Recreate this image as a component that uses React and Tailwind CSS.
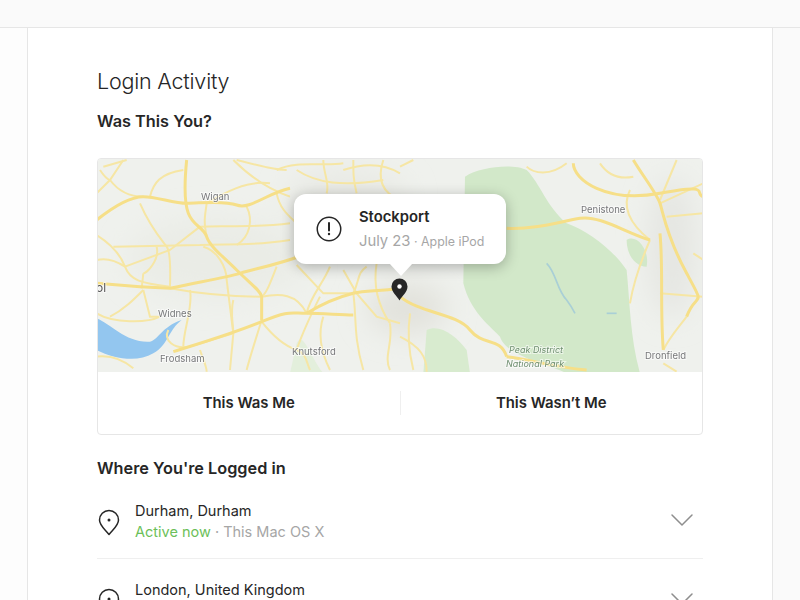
import { ChevronDown } from 'lucide-react';

const FONT = { fontFamily: 'Inter, "Noto Sans", sans-serif' };

function PinOutline() {
    return (
        <svg width="22" height="27" viewBox="0 0 22 27" fill="none" stroke="#262626" strokeWidth="1.5">
            <path d="M11 25.5C7 20.5 1.5 16.5 1.5 11a9.5 9.5 0 0 1 19 0c0 5.500-5.500 9.500-9.500 14.500z" strokeLinejoin="round" />
            <circle cx="11" cy="11" r="1.500" fill="#262626" stroke="none" />
        </svg>
    );
}

function MapBackground() {
    const thick = [
        'M20 210C70 170 120 140 160 140S250 160 290 160 400 150 440 165 530 130 600 115',
        'M290 30C285 80 280 150 295 190S340 230 350 260 400 320 440 360 510 420 515 440L515 510',
        'M20 400L150 410 240 415C300 400 400 385 450 370S560 345 640 315',
        'M250 605C330 580 430 550 515 515S600 490 650 490 750 495 790 495',
        'M790 430C830 420 860 425 930 415',
        'M650 490C700 460 750 440 790 430',
    ];
    const thin = [
        'M20 255C60 280 90 310 105 350S150 400 240 410',
        'M240 415C320 430 420 440 515 440',
        'M515 515C550 560 590 590 620 600S650 640 660 660',
        'M430 550L420 660',
        'M60 90C90 130 130 140 160 140',
        'M40 50L110 30M30 60C50 90 60 90 60 90',
        'M430 30C480 80 540 120 600 140',
        'M560 60C620 30 700 50 760 40',
        'M70 290L330 285C400 280 480 290 600 270',
        'M330 230C400 225 500 235 600 220',
        'M150 160C180 230 215 270 230 290S240 390 240 410',
        'M235 540C220 570 250 600 300 590L430 550',
        'M410 390L430 550',
        'M160 370L155 415',
        'M130 655C100 630 60 615 20 620',
        'M20 490C70 520 170 520 210 500',
        'M790 430C810 390 800 370 830 350',
        'M760 360L800 430 860 500 930 520',
        'M690 440C670 480 640 540 620 600',
        'M880 30C860 90 880 130 930 150',
        'M350 160C345 200 340 210 350 260',
        'M105 350L240 300 330 230',
        'M650 490C660 440 700 400 720 350',
        'M790 430C800 500 790 560 820 660',
        'M860 340C850 400 860 460 900 520',
        'M700 500C680 560 700 620 720 660',
        'M900 520C910 580 880 620 900 660',
        'M620 345L700 430 790 430',
        'M560 350C540 400 530 430 515 440',
        'M515 510C500 560 480 620 470 660',
        'M620 60C680 100 760 110 880 90',
        'M700 30C700 70 720 100 710 130',
        'M790 30C790 70 790 90 800 130',
        'M760 60C820 40 880 40 930 70',
        'M440 30C520 50 560 60 590 60',
        'M100 30L60 90 20 130',
        'M180 140C190 100 210 70 280 60',
        'M350 160C400 130 470 90 540 100',
        'M470 170C490 210 480 260 440 285',
        'M200 290C210 330 170 370 160 370',
        'M340 290C380 300 410 350 410 390',
        'M20 330C60 320 90 340 105 350',
        'M60 500C100 480 130 450 160 420',
        'M300 420C310 470 280 540 280 590',
        'M430 450C420 490 430 520 430 550',
        'M330 600C340 630 350 650 350 665',
        'M515 440C570 430 620 430 650 490',
        'M160 420L180 500 210 500',
        'M560 130C570 180 600 200 620 220',
    ];
    const rightThick = [
        'M320 235C400 240 480 215 540 205S680 250 750 270',
        'M700 30C730 80 770 130 780 160S800 260 860 370 890 420 860 500',
        'M520 40C520 90 620 160 780 130S880 130 910 140',
        'M780 250C790 350 780 480 790 600',
        'M0 440C60 490 170 490 210 540S300 560 320 620',
        'M320 620C400 630 450 650 560 660',
    ];
    const rightThin = [
        'M780 160L910 100',
        'M830 30L780 150',
        'M800 200L910 190',
        'M780 430L910 440',
        'M30 490C20 560 30 620 40 660',
        'M790 640L830 665',
        'M0 50L40 30',
        'M860 500C830 540 810 560 790 600',
        'M500 40C450 80 400 70 380 50',
        'M690 120C660 180 700 230 750 270',
        'M750 270C720 340 700 400 690 460',
        'M880 310L910 330',
        'M600 40C620 70 650 90 700 80',
        'M0 560C60 590 80 620 80 665',
    ];

    return (
        <svg className="block blur-[0.5px]" width="606" height="214" viewBox="0 0 606 214">
            <defs>
                <filter id="soft" x="-50%" y="-50%" width="200%" height="200%">
                    <feGaussianBlur stdDeviation="14" />
                </filter>
            </defs>
            <rect width="606" height="214" fill="#eff1ed" />
            <g filter="url(#soft)">
                <ellipse cx="310" cy="150" rx="40" ry="26" fill="#e2e2dc" />
                <ellipse cx="250" cy="40" rx="60" ry="28" fill="#e8e9e4" />
                <ellipse cx="575" cy="90" rx="24" ry="70" fill="#e5e6e2" />
                <ellipse cx="120" cy="100" rx="90" ry="40" fill="#eaece6" />
            </g>

            <g transform="translate(-7 -8) scale(0.3333)">
                <path d="M20 505C60 520 110 580 180 575 205 570 215 530 275 510 235 540 235 585 190 610 140 640 70 625 20 600Z" fill="#93c6ef" />
                <path d="M620 580C640 540 660 620 700 670L600 670Z" fill="#e3efdc" />
                {thin.map((d) => (
                    <path key={d} d={d} fill="none" stroke="#f6e6a4" strokeWidth="6" />
                ))}
                {thick.map((d) => (
                    <path key={d} d={d} fill="none" stroke="#f6df88" strokeWidth="9" />
                ))}
            </g>

            <g transform="translate(303 -8) scale(0.3333)">
                <path d="M195 80C240 50 340 40 380 60 420 100 440 170 500 220 560 240 640 300 680 360 690 460 690 560 720 670L500 670C440 640 320 620 300 560 260 520 210 480 190 400Z" fill="#d2e8c9" />
                <path d="M80 540C120 520 170 560 200 600L210 670 70 670Z" fill="#d8ebcf" />
                <path d="M680 270C710 250 750 300 740 350 710 350 680 320 680 270Z" fill="#d2e8c9" />
                <path d="M440 340C470 370 470 420 500 450 515 470 520 480 525 490" fill="none" stroke="#a9cfd6" strokeWidth="5" />
                <path d="M620 490L650 490" stroke="#a9cfd6" strokeWidth="5" />
                {rightThin.map((d) => (
                    <path key={d} d={d} fill="none" stroke="#f6e6a4" strokeWidth="6" />
                ))}
                {rightThick.map((d) => (
                    <path key={d} d={d} fill="none" stroke="#f6df88" strokeWidth="9" />
                ))}
            </g>

            <g fontSize="9.5" fill="#77787a" stroke="#ffffff" strokeWidth="2" strokeOpacity="0.6" paintOrder="stroke" style={FONT}>
                <text x="104" y="42">Wigan</text>
                <text x="61" y="159">Widnes</text>
                <text x="63" y="204">Frodsham</text>
                <text x="195" y="197">Knutsford</text>
                <text x="484" y="55">Penistone</text>
                <text x="548" y="201">Dronfield</text>
                <text x="-1" y="134" fontSize="12" fill="#555">ol</text>
                <g fontStyle="italic" fill="#6f8f70" fontSize="9">
                    <text x="412" y="195">Peak District</text>
                    <text x="409" y="209">National Park</text>
                </g>
            </g>
        </svg>
    );
}

function SessionRow({ city, children }) {
    return (
        <div className="flex items-start h-[79px] pt-[21px] border-b border-[#efefef]">
            <div className="w-[38px] pt-[8px] pl-[1px] shrink-0">
                <PinOutline />
            </div>
            <div className="flex-1 text-[14.500px] leading-[20px]">
                <div className="text-[#262626]">{city}</div>
                <div className="mt-px text-[#a6a6a6]">{children}</div>
            </div>
            <ChevronDown className="-mt-px mr-px" size={40} strokeWidth={0.9} color="#8e8e8e" />
        </div>
    );
}

export default function App() {
    return (
        <div className="h-[600px] overflow-hidden bg-[#fafafa]" style={FONT}>
            <div className="h-[28px] border-b border-[#e6e6e6]" />
            <div className="flex h-[572px]">
                <div className="w-[27px] bg-[#fdfdfd] shrink-0" />
                <div className="w-[746px] shrink-0 bg-white border-x border-[#e6e6e6] px-[69px]">
                    <h1 className="mt-[38px] text-[21.500px] leading-[30px] font-light tracking-[-0.2px] text-[#262626]">
                        Login Activity
                    </h1>
                    <h2 className="mt-[13px] text-[16.300px] leading-[24px] font-semibold text-[#262626]">
                        Was This You?
                    </h2>

                    <div className="mt-[25px] h-[277px] rounded-[4px] border border-[#e6e6e6] overflow-hidden">
                        <div className="relative -mx-px -mt-px">
                            <MapBackground />
                            <div className="absolute left-[197px] top-[36px] w-[212px] h-[70px] bg-white rounded-[12px] shadow-[0_3px_14px_rgba(0,0,0,0.28)] flex items-center">
                                <svg className="ml-[22px] shrink-0" width="26" height="26" viewBox="0 0 26 26" fill="none">
                                    <circle cx="13" cy="13" r="11.750" stroke="#262626" strokeWidth="1.500" />
                                    <path d="M13 7v7.500" stroke="#262626" strokeWidth="2" strokeLinecap="round" />
                                    <circle cx="13" cy="18" r="1.200" fill="#262626" />
                                </svg>
                                <div className="ml-[17px] whitespace-nowrap">
                                    <div className="text-[14.800px] leading-[20px] font-semibold text-[#262626]">Stockport</div>
                                    <div className="mt-[3px] leading-[20px] text-[#a6a6a6]">
                                        <span className="text-[14.800px]">July 23</span>
                                        <span className="text-[12.400px]"> · Apple iPod</span>
                                    </div>
                                </div>
                            </div>
                            <div className="absolute left-[292px] top-[105px] w-0 h-0 border-x-[12px] border-x-transparent border-t-[13px] border-t-white" />
                            <svg className="absolute left-[294px] top-[120px]" width="17" height="23" viewBox="0 0 17 23">
                                <path d="M8.500 22.500C6 18 .5 14 .5 8.500a8 8 0 0 1 16 0c0 5.500-5.500 9.500-8 14z" fill="#262626" />
                                <circle cx="8.500" cy="8.500" r="2.200" fill="#fff" />
                            </svg>
                        </div>
                        <div className="flex items-center h-[62px]">
                            <button className="flex-1 text-[14.900px] font-semibold text-[#262626]">This Was Me</button>
                            <div className="w-px h-[24px] bg-[#efefef]" />
                            <button className="flex-1 text-[14.900px] font-semibold text-[#262626]">This Wasn’t Me</button>
                        </div>
                    </div>

                    <h2 className="mt-[21px] text-[16.300px] leading-[24px] font-semibold text-[#262626]">
                        Where You're Logged in
                    </h2>
                    <SessionRow city="Durham, Durham">
                        <span className="text-[#6cbf5a]">Active now</span> · This Mac OS X
                    </SessionRow>
                    <SessionRow city="London, United Kingdom" />
                </div>
                <div className="flex-1" />
            </div>
        </div>
    );
}
